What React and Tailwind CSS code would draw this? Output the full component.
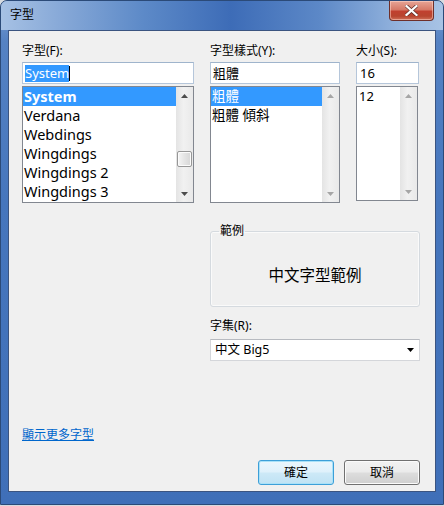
import React from "react";

const ui = "font-['Noto_Sans','Noto_Sans_CJK_TC',sans-serif]";

const Arrow = ({ dir = "up", color = "#4d4d4d" }) => (
  <svg width="7" height="4" viewBox="0 0 7 4">
    <polygon points={dir === "up" ? "0,4 3.5,0 7,4" : "0,0 7,0 3.5,4"} fill={color} />
  </svg>
);

// Win7 style vertical scrollbar, thumb only on the font list
const ScrollBar = ({ thumb }) => {
  const c = thumb ? "#4d4d4d" : "#a6a6a6";
  return (
    <div className="flex h-full w-[17px] shrink-0 flex-col bg-[linear-gradient(90deg,#e4e4e4,#f1f1f1_45%,#e9e9e9)]">
      <div className="flex h-[17px] items-center justify-center">
        <Arrow dir="up" color={c} />
      </div>
      <div className="flex-1">
        {thumb && (
          <div className="mx-auto mt-[47px] h-[16px] w-[15px] rounded-[2px] border border-[#979797] bg-[linear-gradient(90deg,#f5f5f5,#e4e4e4_50%,#d6d6d6)] shadow-[inset_0_0_0_1px_#fbfbfb]" />
        )}
      </div>
      <div className="flex h-[17px] items-center justify-center">
        <Arrow dir="down" color={c} />
      </div>
    </div>
  );
};

const Input = ({ children, w }) => (
  <div
    className={`flex h-[22px] items-center border border-[#b5c6da] border-t-[#9fb4cc] bg-white pl-[2px] ${w}`}
  >
    {children}
  </div>
);

const ListBox = ({ items, selected, thumb, w, h, textCls }) => (
  <div className={`mt-[2px] flex border border-[#828790] bg-white ${w} ${h}`}>
    <div className="flex flex-1 flex-col">
      {items.map((it) => (
        <div
          key={it}
          className={`h-[19px] shrink-0 whitespace-nowrap pl-[1px] leading-[19px] ${textCls} ${
            it === selected ? "bg-[#3399ff] font-bold text-white" : "text-black"
          }`}
        >
          {it}
        </div>
      ))}
    </div>
    <ScrollBar thumb={thumb} />
  </div>
);

const Label = ({ children }) => (
  <div className="h-[16px] text-[12px] leading-[16px] text-black">{children}</div>
);

const fonts = ["System", "Verdana", "Webdings", "Wingdings", "Wingdings 2", "Wingdings 3"];

export default function App() {
  return (
    <div className={`h-[506px] w-[444px] bg-[#d7dbe0] ${ui}`}>
      <div className="flex h-[505px] w-[444px] flex-col rounded-t-[7px] border border-[#2b4a78] bg-[linear-gradient(180deg,#7b9fd2_0px,#5582c3_40px,#4676bd_200px,#3f6fb8_100%)]">
        {/* title bar */}
        <div className="flex h-[29px] shrink-0 items-start justify-between rounded-t-[6px] bg-[linear-gradient(90deg,#a6c1e4_0%,#86a8d7_14%,#5d8ac8_32%,#3d6cb7_52%,#5c88c7_72%,#93b3dd_90%,#a8c3e5_100%)]">
          <div className="pl-[9px] pt-[6px] text-[12px] leading-[16px] text-black">字型</div>
          <div className="mr-[9px] flex h-[20px] w-[45px] items-center justify-center rounded-b-[4px] border border-t-0 border-[#6e2f2a] bg-[linear-gradient(180deg,#e7a596_0%,#d67a68_45%,#c0402f_55%,#b8452f_80%,#d0705a_100%)] shadow-[inset_0_0_0_1px_rgba(255,220,210,0.5)]">
            <svg width="13" height="11" viewBox="0 0 13 11">
              <path d="M1.5 1 L11.5 10 M11.5 1 L1.5 10" stroke="#5a2a24" strokeWidth="3.6" strokeLinecap="square" />
              <path d="M1.5 1 L11.5 10 M11.5 1 L1.5 10" stroke="#ffffff" strokeWidth="2.2" strokeLinecap="square" />
            </svg>
          </div>
        </div>

        {/* client area */}
        <div className="ml-[7px] mr-[7px] flex h-[462px] flex-col border border-[#3b5480] bg-[#f0f0f0]">
          <div className="flex gap-[16px] pl-[13px] pt-[12px]">
            <div className="flex w-[172px] flex-col">
              <Label>字型(F):</Label>
              <div className="mt-[3px]">
                <Input w="w-[172px]">
                  <span className="bg-[#3399ff] text-[13px] leading-[17px] text-white">System</span>
                  <span className="h-[15px] w-[1px] bg-black" />
                </Input>
              </div>
              <ListBox items={fonts} selected="System" thumb w="w-[172px]" h="h-[117px]" textCls="text-[14.5px]" />
            </div>
            <div className="flex w-[130px] flex-col">
              <Label>字型樣式(Y):</Label>
              <div className="mt-[3px]">
                <Input w="w-[130px]">
                  <span className="text-[13px] leading-[17px]">粗體</span>
                </Input>
              </div>
              <ListBox items={["粗體", "粗體 傾斜"]} selected="粗體" w="w-[130px]" h="h-[117px]" textCls="text-[13.5px] !font-normal" />
            </div>
            <div className="flex w-[63px] flex-col">
              <Label>大小(S):</Label>
              <div className="mt-[3px]">
                <Input w="w-[63px]">
                  <span className="pl-[1px] text-[13px] leading-[17px]">16</span>
                </Input>
              </div>
              <ListBox items={["12"]} w="w-[62px]" h="h-[115px]" textCls="text-[13px] pl-[2px]" />
            </div>
          </div>

          {/* sample + charset */}
          <div className="ml-[201px] mt-[20px] flex w-[210px] flex-col">
            <fieldset className="h-[84px] rounded-[3px] border border-[#d5dadf] shadow-[inset_0_0_0_1px_#fafafa]">
              <legend className="ml-[8px] px-[1px] text-[12px] leading-[16px] text-black">範例</legend>
              <div className="flex h-[67px] items-center justify-center pt-[6px] text-[15.5px] text-black">
                中文字型範例
              </div>
            </fieldset>
            <div className="mt-[11px]">
              <Label>字集(R):</Label>
            </div>
            <div className="mt-[5px] flex h-[22px] items-center justify-between border border-[#d4d6da] border-t-[#b7bac0] bg-white pl-[4px] pr-[5px]">
              <span className="text-[12.5px] text-black">中文 Big5</span>
              <Arrow dir="down" color="#000" />
            </div>
          </div>

          <div className="mt-[66px] h-[16px] pl-[13px] text-[12px] leading-[16px]">
            <span className="text-[#0066cc] underline">顯示更多字型</span>
          </div>

          <div className="mt-[17px] flex justify-end gap-[10px] pr-[15px]">
            <button className="flex h-[25px] w-[76px] items-center justify-center rounded-[3px] border border-[#3c9fd8] bg-[linear-gradient(180deg,#eaf6fd_0%,#dff1fb_48%,#cde9f7_52%,#bfe2f4_100%)] text-[12px] text-black shadow-[inset_0_0_0_1px_#a9e1f8]">
              確定
            </button>
            <button className="flex h-[25px] w-[76px] items-center justify-center rounded-[3px] border border-[#707070] bg-[linear-gradient(180deg,#f2f2f2_0%,#ebebeb_48%,#dddddd_52%,#cfcfcf_100%)] text-[12px] text-black shadow-[inset_0_0_0_1px_#fbfbfb]">
              取消
            </button>
          </div>
        </div>
      </div>
    </div>
  );
}
